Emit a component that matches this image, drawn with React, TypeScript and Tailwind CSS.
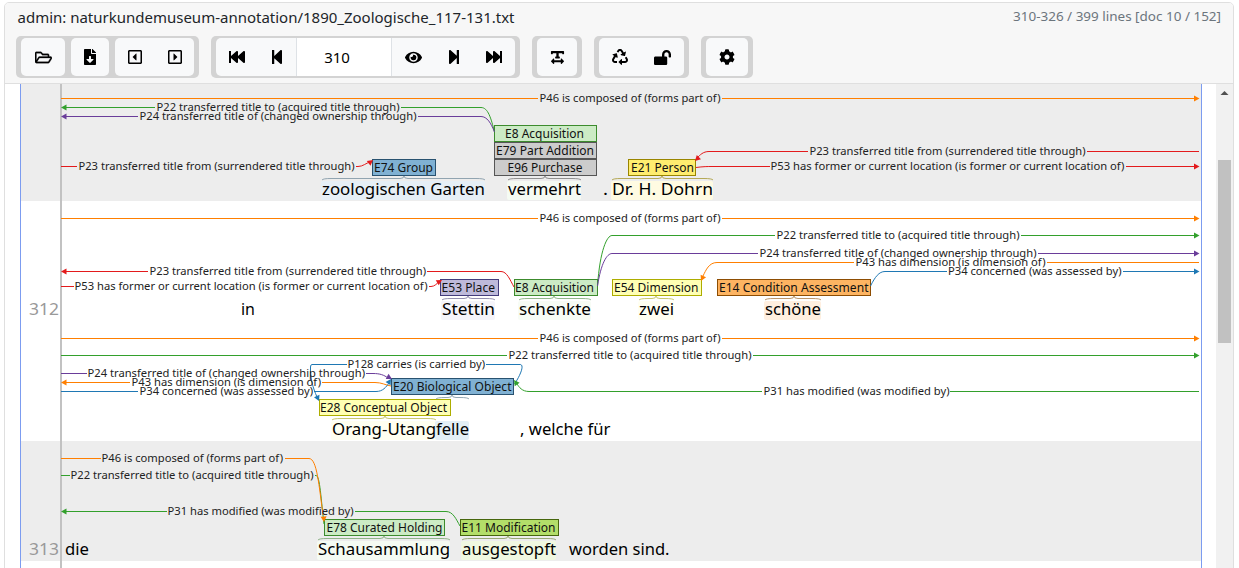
import React from 'react';
import {
  FaCog, FaEye, FaFastBackward, FaFastForward, FaFileDownload, FaLockOpen, FaRecycle,
  FaRegCaretSquareLeft, FaRegCaretSquareRight, FaRegFolderOpen, FaStepBackward, FaStepForward, FaTextWidth,
} from 'react-icons/fa';

const ORANGE = '#ff7f00';
const GREEN = '#33a02c';
const PURPLE = '#6a3d9a';
const RED = '#e31a1c';
const BLUE = '#1f78b4';

type Arc = { d: string; c: string; head?: [number, number, number] };
type Label = { x1: number; x2: number; y: number; t: string };
type Span = { x: number; y: number; w: number; t: string; fill: string; stroke: string; tx?: number; tw: number };
type Token = { x: number; w: number; y: number; t: string; bg?: string };
type Brace = { x1: number; x2: number; m: number; y: number; c: string };
type Line = { top: number; height: number; no?: string; noY?: number; shade: boolean; arcs: Arc[]; labels: Label[]; spans: Span[]; tokens: Token[]; braces: Brace[] };

const LINES: Line[] = [
  {
    top: 84, height: 117, shade: true,
    arcs: [
      { d: 'M61 98.5H538M722 98.5H1194', c: ORANGE, head: [1199.5, 98.5, 0] },
      { d: 'M66 107.5H155M401 107.5H481C488 107.5 491 118 494.5 132', c: GREEN, head: [61, 107.5, 180] },
      { d: 'M66 116.5H138M418 116.5H481C487 116.5 491 123 494.5 132', c: PURPLE, head: [61, 116.5, 180] },
      { d: 'M61 166.5H77M356 166.5H358C363 166.5 366 163 370 162', c: RED, head: [373, 160, -38] },
      { d: 'M1199 151.5H1087M808 151.5H709C703 151.5 700 155 697 158', c: RED, head: [695, 161, 135] },
      { d: 'M696 167.5C703 166.5 708 166.5 712 166.5H770M1126 166.5H1194', c: RED, head: [1199.5, 166.5, 0] },
    ],
    labels: [
      { x1: 540, x2: 721, y: 98, t: 'P46 is composed of (forms part of)' },
      { x1: 157, x2: 400, y: 107, t: 'P22 transferred title to (acquired title through)' },
      { x1: 140, x2: 417, y: 116, t: 'P24 transferred title of (changed ownership through)' },
      { x1: 79, x2: 355, y: 166, t: 'P23 transferred title from (surrendered title through)' },
      { x1: 810, x2: 1086, y: 151, t: 'P23 transferred title from (surrendered title through)' },
      { x1: 771, x2: 1125, y: 166, t: 'P53 has former or current location (is former or current location of)' },
    ],
    spans: [
      { x: 372, y: 159, w: 64, t: 'E74 Group', fill: '#80b1d3', stroke: '#295270', tx: 374, tw: 59 },
      { x: 494, y: 125, w: 103, t: 'E8 Acquisition', fill: '#ccebc5', stroke: '#3c8b2d', tx: 505, tw: 79 },
      { x: 494, y: 142, w: 103, t: 'E79 Part Addition', fill: '#cccccc', stroke: '#555555', tx: 496, tw: 98 },
      { x: 494, y: 159, w: 103, t: 'E96 Purchase', fill: '#cccccc', stroke: '#555555', tx: 507.5, tw: 75 },
      { x: 628, y: 159, w: 68, t: 'E21 Person', fill: '#ffed6f', stroke: '#998500', tx: 631, tw: 63 },
    ],
    tokens: [
      { x: 322, w: 163, y: 195, t: 'zoologischen Garten', bg: '#e6eff6' },
      { x: 508, w: 73, y: 195, t: 'vermehrt', bg: '#f5fbf3' },
      { x: 603, w: 5, y: 195, t: '.' },
      { x: 612, w: 101, y: 195, t: 'Dr. H. Dohrn', bg: '#fffbe2' },
    ],
    braces: [
      { x1: 322, x2: 485, m: 404, y: 180, c: '#7890a0' },
      { x1: 508, x2: 581, m: 545, y: 180, c: '#777777' },
      { x1: 612, x2: 713, m: 662, y: 180, c: '#a69730' },
    ],
  },
  {
    top: 201, height: 240, no: '312', noY: 315, shade: false,
    arcs: [
      { d: 'M61 218.5H538M722 218.5H1194', c: ORANGE, head: [1199.5, 218.5, 0] },
      { d: 'M597.5 286C600 250 607 235.5 612 235.5H775M1021 235.5H1194', c: GREEN, head: [1199.5, 235.5, 0] },
      { d: 'M597.5 286C601 263 607 253.5 612 253.5H758M1038 253.5H1194', c: PURPLE, head: [1199.5, 253.5, 0] },
      { d: 'M1199 262.5H1047M854 262.5H717C709 262.5 706 270 703 276', c: ORANGE, head: [701, 281, 115] },
      { d: 'M870.5 286C875 277 879 271.5 885 271.5H947M1123 271.5H1194', c: BLUE, head: [1199.5, 271.5, 0] },
      { d: 'M66 271.5H148M427 271.5H501C507 271.5 510 280 514 287', c: RED, head: [61, 271.5, 180] },
      { d: 'M61 286.5H74M429 286.5H431C435 286.5 437 283 439 282', c: RED, head: [442, 280, -30] },
      { d: 'M61 338.5H538M722 338.5H1194', c: ORANGE, head: [1199.5, 338.5, 0] },
      { d: 'M61 355.5H507M753 355.5H1194', c: GREEN, head: [1199.5, 355.5, 0] },
      { d: 'M486 364.5H520C525 364.5 520 376 514.5 384M347 364.5H312Q310.5 364.5 310.5 367C310 378 313 388 317 397', c: BLUE, head: [319, 401, 66] },
      { d: 'M61 373.5H87M366 373.5H373C380 373.5 384 375 388 378', c: PURPLE, head: [392, 379, 28] },
      { d: 'M66 382.5H130M322 382.5H375C382 382.5 385 385 391 386', c: ORANGE, head: [61, 382.5, 180] },
      { d: 'M61 391.5H138M314 391.5H376C383 391.5 386 387 389 383', c: BLUE, head: [391, 379, -58] },
      { d: 'M1199 391.5H950M762 391.5H529C522 391.5 519 387 517 384', c: GREEN, head: [514, 380, 235] },
    ],
    labels: [
      { x1: 540, x2: 721, y: 218, t: 'P46 is composed of (forms part of)' },
      { x1: 777, x2: 1020, y: 235, t: 'P22 transferred title to (acquired title through)' },
      { x1: 760, x2: 1037, y: 253, t: 'P24 transferred title of (changed ownership through)' },
      { x1: 856, x2: 1046, y: 262, t: 'P43 has dimension (is dimension of)' },
      { x1: 948.5, x2: 1122, y: 271, t: 'P34 concerned (was assessed by)' },
      { x1: 150, x2: 426.5, y: 271, t: 'P23 transferred title from (surrendered title through)' },
      { x1: 75, x2: 428, y: 286, t: 'P53 has former or current location (is former or current location of)' },
      { x1: 540, x2: 721, y: 338, t: 'P46 is composed of (forms part of)' },
      { x1: 509, x2: 752, y: 355, t: 'P22 transferred title to (acquired title through)' },
      { x1: 348, x2: 485.5, y: 364, t: 'P128 carries (is carried by)' },
      { x1: 88, x2: 365.5, y: 373, t: 'P24 transferred title of (changed ownership through)' },
      { x1: 132, x2: 321.5, y: 382, t: 'P43 has dimension (is dimension of)' },
      { x1: 140, x2: 313.5, y: 391, t: 'P34 concerned (was assessed by)' },
      { x1: 764, x2: 950, y: 391, t: 'P31 has modified (was modified by)' },
    ],
    spans: [
      { x: 440, y: 279, w: 59, t: 'E53 Place', fill: '#bebada', stroke: '#443c7c', tx: 441.5, tw: 53.5 },
      { x: 514, y: 279, w: 84, t: 'E8 Acquisition', fill: '#ccebc5', stroke: '#3c8b2d', tx: 515, tw: 79 },
      { x: 612, y: 279, w: 90, t: 'E54 Dimension', fill: '#ffffb3', stroke: '#adad00', tx: 614, tw: 84.5 },
      { x: 717, y: 279, w: 154, t: 'E14 Condition Assessment', fill: '#fdb462', stroke: '#8d4d02', tx: 719, tw: 149.5 },
      { x: 391, y: 378, w: 123, t: 'E20 Biological Object', fill: '#80b1d3', stroke: '#295270', tx: 393, tw: 118.5 },
      { x: 319, y: 399, w: 132, t: 'E28 Conceptual Object', fill: '#ffffb3', stroke: '#adad00', tx: 320, tw: 127 },
    ],
    tokens: [
      { x: 241, w: 14, y: 315, t: 'in' },
      { x: 442, w: 53, y: 315, t: 'Stettin', bg: '#f5f4fa' },
      { x: 519, w: 72, y: 315, t: 'schenkte', bg: '#f7fcf5' },
      { x: 639, w: 35, y: 315, t: 'zwei', bg: '#fffff1' },
      { x: 765, w: 56, y: 315, t: 'schöne', bg: '#ffefe0' },
      { x: 332, w: 104, y: 435, t: 'Orang-Utang', bg: '#fffff1' },
      { x: 436, w: 33, y: 435, t: 'felle', bg: '#e3eff6' },
      { x: 520, w: 90.5, y: 435, t: ', welche für' },
    ],
    braces: [
      { x1: 442, x2: 495, m: 468, y: 300, c: '#77739a' },
      { x1: 519, x2: 591, m: 554, y: 300, c: '#76a36e' },
      { x1: 639, x2: 674, m: 656, y: 300, c: '#b9b94b' },
      { x1: 765, x2: 821, m: 794, y: 300, c: '#a97b46' },
      { x1: 332, x2: 436, m: 385, y: 420, c: '#b9b94b' },
      { x1: 436, x2: 469, m: 452, y: 399, c: '#7890a0' },
    ],
  },
  {
    top: 441, height: 120, no: '313', noY: 555, shade: true,
    arcs: [
      { d: 'M61 475.5H70M315 475.5H316C320 475.5 321 500 324 524', c: GREEN },
      { d: 'M61 458.5H101M285 458.5H309C317 458.5 319 486 323 515', c: ORANGE, head: [324, 522, 86] },
      { d: 'M66 511.5H167M355 511.5H446C453 511.5 456 519 460 526', c: GREEN, head: [61, 511.5, 180] },
    ],
    labels: [
      { x1: 102, x2: 283.5, y: 458, t: 'P46 is composed of (forms part of)' },
      { x1: 71, x2: 314, y: 475, t: 'P22 transferred title to (acquired title through)' },
      { x1: 168, x2: 354, y: 511, t: 'P31 has modified (was modified by)' },
    ],
    spans: [
      { x: 324, y: 519, w: 121, t: 'E78 Curated Holding', fill: '#ccebc5', stroke: '#3c8b2d', tx: 326.5, tw: 116 },
      { x: 460, y: 519, w: 99, t: 'E11 Modification', fill: '#b3de69', stroke: '#46660d', tx: 461.5, tw: 94 },
    ],
    tokens: [
      { x: 65, w: 24, y: 555, t: 'die' },
      { x: 318, w: 132, y: 555, t: 'Schausammlung', bg: '#f5fbf3' },
      { x: 462, w: 94, y: 555, t: 'ausgestopft', bg: '#f0f8e1' },
      { x: 569, w: 100.5, y: 555, t: 'worden sind.' },
    ],
    braces: [
      { x1: 318, x2: 450, m: 384, y: 540, c: '#76a36e' },
      { x1: 462, x2: 556, m: 508, y: 540, c: '#819657' },
    ],
  },
];

function Diagram({ line }: { line: Line }) {
  return (
    <svg className="block shrink-0 overflow-visible" width={1139} height={line.height} viewBox={`62 ${line.top} 1139 ${line.height}`}>
      {line.tokens.map((t) => t.bg && <rect key={t.t} x={t.x - 1} y={t.y - 14} width={t.w + 1} height={19} rx={2} fill={t.bg} />)}
      {line.spans.map((s) => (
        <g key={s.t}>
          <rect x={s.x + 0.5} y={s.y + 0.5} width={s.w - 1} height={16} fill={s.fill} stroke={s.stroke} />
          <text x={s.tx ?? s.x + 2.5} y={s.y + 13} textLength={s.tw} lengthAdjust="spacingAndGlyphs" className="font-['Noto_Sans',sans-serif] text-[12px]" fill="#111">{s.t}</text>
        </g>
      ))}
      {line.braces.map((b) => (
        <path key={b.x1} d={`M${b.x1} ${b.y}Q${b.x1 + 1} ${b.y - 1.5} ${b.x1 + 9} ${b.y - 1.5}H${b.m - 4}Q${b.m} ${b.y - 1.5} ${b.m} ${b.y - 4}Q${b.m} ${b.y - 1.5} ${b.m + 4} ${b.y - 1.5}H${b.x2 - 9}Q${b.x2 - 1} ${b.y - 1.5} ${b.x2} ${b.y}`} fill="none" stroke={b.c} strokeWidth={0.8} />
      ))}
      {line.arcs.map((a, i) => (
        <g key={i}>
          <path d={a.d} fill="none" stroke={a.c} strokeWidth={1} />
          {a.head && <path d="M0 0L-5.5 -3V3Z" fill={a.c} transform={`translate(${a.head[0]} ${a.head[1]}) rotate(${a.head[2]})`} />}
        </g>
      ))}
      {line.labels.map((l, i) => (
        <text key={i} x={l.x1 - 0.5} y={l.y + 4} textLength={l.x2 - l.x1} lengthAdjust="spacingAndGlyphs" className="font-['Noto_Sans',sans-serif] text-[10.5px]" fill="#222">{l.t}</text>
      ))}
      {line.tokens.map((t) => (
        <text key={t.t} x={t.x} y={t.y} textLength={t.w} lengthAdjust="spacingAndGlyphs" className="font-['Noto_Sans',sans-serif] text-[16px]" fill="#000">{t.t}</text>
      ))}
    </svg>
  );
}

const group = 'flex h-[42px] rounded-[5px] bg-[#d3d3d3] px-[5px] py-[2px]';
const box = 'flex h-[38px] items-center overflow-hidden rounded-[5px] bg-[#f8f9fa]';
const cell = 'flex h-full shrink-0 items-center justify-center';

export default function App() {
  return (
    <div className="h-[568px] w-[1239px] overflow-hidden bg-white pl-1 pt-[2px] font-['Noto_Sans',sans-serif] text-black">
      <div className="flex h-[580px] w-[1230px] flex-col overflow-hidden rounded-[5px] border border-[#dfdfdf] bg-white">
        <header className="h-[81px] shrink-0 border-b border-[#dfdfdf] bg-[#f7f7f7]">
          <div className="flex h-[33px] justify-between pl-3 pr-3">
            <h1 className="pt-[3px] text-[15px] leading-6 text-[#212529]">
              <svg className="block overflow-visible" width="498" height="24"><text x="0.5" y="17" textLength="497" lengthAdjust="spacingAndGlyphs" fill="#212529">admin: naturkundemuseum-annotation/1890_Zoologische_117-131.txt</text></svg>
            </h1>
            <div className="pt-[3px] text-[13px] text-[#6c757d]">
              <svg className="block overflow-visible" width="208" height="20"><text x="0" y="15" textLength="208" lengthAdjust="spacingAndGlyphs" fill="#6c757d">310-326 / 399 lines [doc 10 / 152]</text></svg>
            </div>
          </div>
          <div className="flex gap-3 pl-[11px]">
            <div className={`${group} w-[183px] justify-between`}>
              <div className={box}><span className={`${cell} w-[44px]`}><FaRegFolderOpen size={17} stroke="currentColor" strokeWidth={10} /></span></div>
              <div className={box}><span className={`${cell} w-[38px]`}><FaFileDownload size={16} /></span></div>
              <div className={box}><span className={`${cell} w-[40px]`}><FaRegCaretSquareLeft size={16} /></span><span className={`${cell} w-[39px]`}><FaRegCaretSquareRight size={16} /></span></div>
            </div>
            <div className={group}>
              <div className={box}>
                <span className={`${cell} w-[42px]`}><FaFastBackward size={16} /></span>
                <span className={`${cell} w-[38px]`}><FaStepBackward size={16} /></span>
                <span className={`${cell} w-[96px] border-x border-[#dee2e6] bg-white pr-[14px] text-[15px]`}>310</span>
                <span className={`${cell} w-[42px]`}><FaEye size={17} /></span>
                <span className={`${cell} w-[40px]`}><FaStepForward size={16} /></span>
                <span className={`${cell} w-[41px] pr-px`}><FaFastForward size={16} /></span>
              </div>
            </div>
            <div className={group}><div className={box}><span className={`${cell} w-[40px]`}><FaTextWidth size={15} /></span></div></div>
            <div className={group}><div className={box}><span className={`${cell} w-[43px] pr-px`}><FaRecycle size={16} /></span><span className={`${cell} w-[42px] pr-px`}><FaLockOpen size={17} /></span></div></div>
            <div className={group}><div className={box}><span className={`${cell} w-[42px]`}><FaCog size={16} /></span></div></div>
          </div>
        </header>
        <main className="flex min-h-0 flex-1">
          <section className="ml-[15px] flex w-[1182px] flex-col border-x border-[#7c9cf0]">
            {LINES.map((line) => (
              <div key={line.top} className={`flex shrink-0 ${line.shade ? 'bg-[#ededed]' : 'bg-white'}`}>
                <div className="w-[41px] shrink-0 border-r-2 border-[#c2c2c2]">
                  {line.no && <svg className="block" width="39" height={line.height}><text x="8" y={line.noY! - line.top} textLength="30" lengthAdjust="spacingAndGlyphs" fill="#999" className="text-[16px]">{line.no}</text></svg>}
                </div>
                <Diagram line={line} />
              </div>
            ))}
            <div className="w-[41px] flex-1 border-r-2 border-[#c2c2c2] bg-white" />
          </section>
          <aside className="ml-auto flex w-[17px] flex-col items-center bg-[#f1f1f1]">
            <svg width="17" height="17"><path d="M4.5 11L8.5 7L12.5 11Z" fill="#505050" /></svg>
            <div className="mt-[59px] h-[183px] w-[13px] bg-[#c1c1c1]" />
          </aside>
        </main>
      </div>
    </div>
  );
}
